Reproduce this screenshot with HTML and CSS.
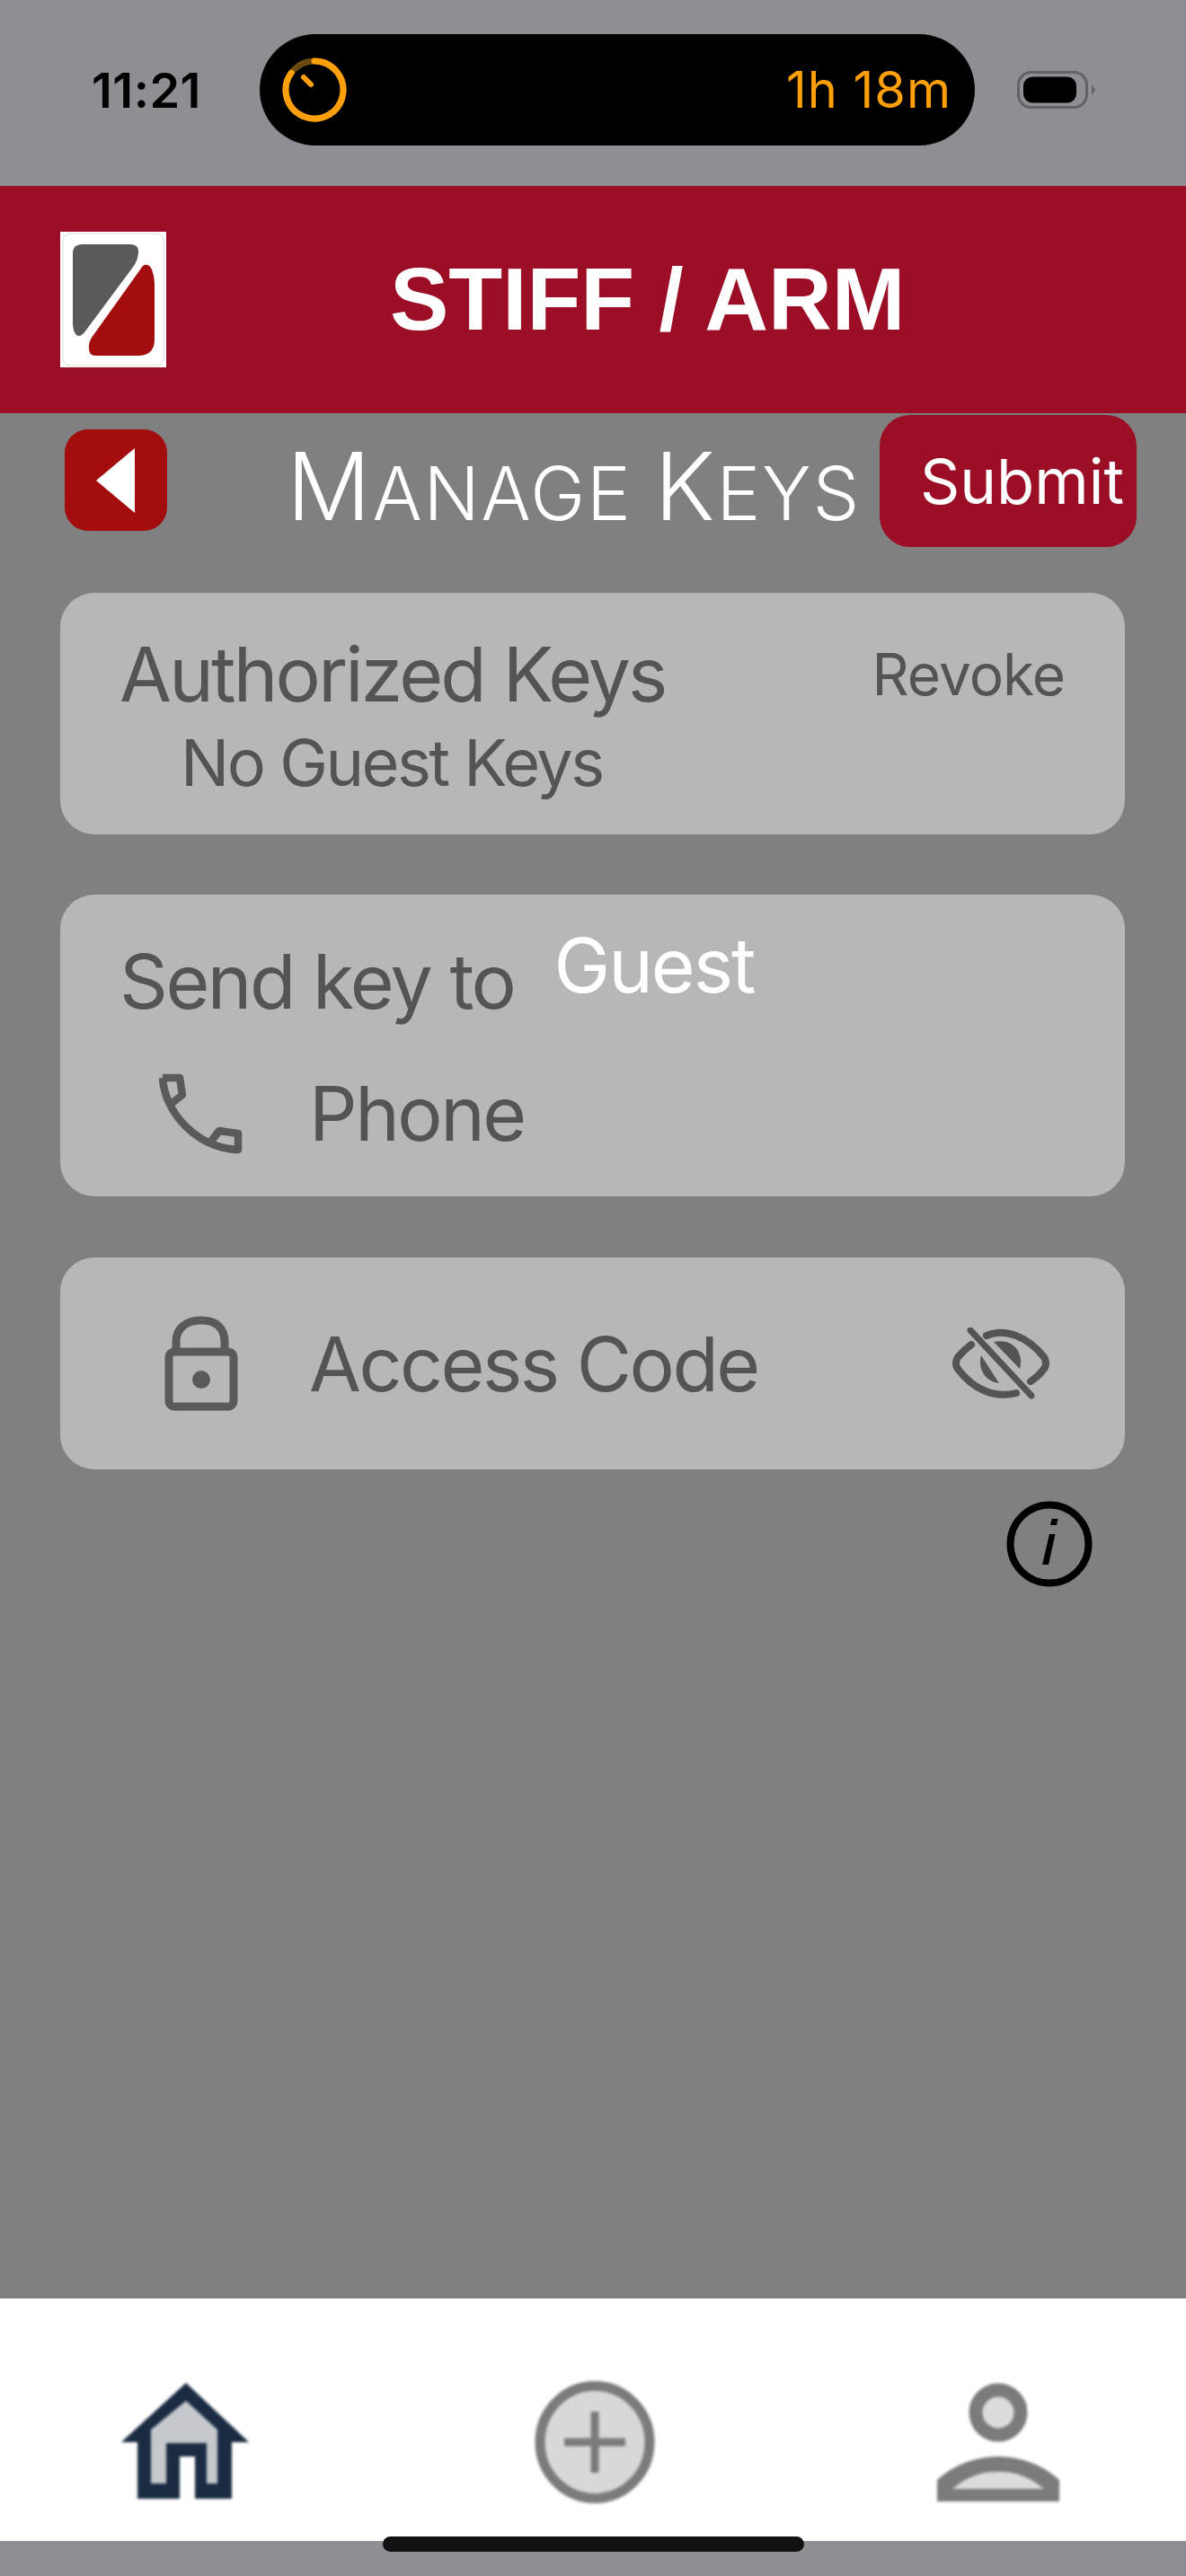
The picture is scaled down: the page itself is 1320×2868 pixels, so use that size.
FILE: index.html
```html
<!DOCTYPE html>
<html lang="en">
<head>
    <meta charset="UTF-8">
    <title>Stiff / Arm - Manage Keys</title>
    <link rel="stylesheet" href="styles.css">
</head>
<body>
    <div class="phone">
        <!-- Status bar -->
        <div class="status-bar">
            <span class="time">11:21</span>
            <div class="island">
                <svg class="timer" width="72" height="72" viewBox="0 0 72 72" fill="none">
                    <circle cx="36" cy="36" r="32" stroke="#6b4a10" stroke-width="7"/>
                    <path d="M36 4A32 32 0 1 1 10.100 17.200" stroke="#ff9f0a" stroke-width="7" stroke-linecap="round"/>
                    <path d="M24 22L32 30" stroke="#ff9f0a" stroke-width="6" stroke-linecap="round"/>
                </svg>
                <span class="timer-text">1h 18m</span>
            </div>
            <svg class="battery" width="88" height="42" viewBox="0 0 88 42">
                <rect x="1.500" y="1.500" width="76" height="39" rx="14" fill="none" stroke="#636366" stroke-width="3"/>
                <rect x="7" y="6.500" width="59" height="29" rx="10" fill="#000"/>
                <path d="M83 15L87 21L83 27Z" fill="#636366"/>
            </svg>
        </div>

        <!-- Header -->
        <header class="app-header">
            <svg class="logo" width="118" height="151" viewBox="0 0 118 151">
                <rect width="118" height="151" fill="#fff"/>
                <rect x="3" y="2" width="112" height="147" rx="8" fill="none" stroke="#dcdce0" stroke-width="1"/>
                <path d="M14 24Q14 14 25 14H78Q88 14 87 24Q86 32 82 38L27 112Q20 120 16 112Q14 108 14 102Z" fill="#5a5a5a"/>
                <path d="M92 38Q98 34 102 42Q105 50 105 58V120Q105 137 88 138H40Q31 138 32 128Q32 121 37 115Z" fill="#a30d0d"/>
            </svg>
            <h1 class="app-title">STIFF / ARM</h1>
        </header>

        <!-- Main content -->
        <main class="content">
            <div class="title-row">
                <button class="back-button">
                    <svg width="44" height="72" viewBox="0 0 44 72"><path d="M43 0V72L0 36Z" fill="#fff"/></svg>
                </button>
                <h2 class="page-title"><span class="cap">M</span>anage <span class="cap">K</span>eys</h2>
                <button class="submit-button">Submit</button>
            </div>

            <section class="card keys-card">
                <div class="keys-top">
                    <span class="card-label">Authorized Keys</span>
                    <span class="revoke">Revoke</span>
                </div>
                <div class="no-keys">No Guest Keys</div>
            </section>

            <section class="card send-card">
                <div class="send-top">
                    <span class="card-label">Send key to</span>
                    <span class="guest">Guest</span>
                </div>
                <div class="field-row">
                    <svg class="field-icon" width="96" height="92" viewBox="0 0 96 92" fill="none" stroke="#5a5a5a" stroke-width="8.500" stroke-linejoin="round">
                        <path d="M5 6H24L27 25L13 36"/>
                        <path d="M5 6C7 44 42 84 89 86V68L68 65L57 79"/>
                    </svg>
                    <span class="card-label">Phone</span>
                </div>
            </section>

            <section class="card code-card">
                <svg class="field-icon" width="96" height="106" viewBox="0 0 96 106" fill="none" stroke="#5a5a5a" stroke-width="9">
                    <path d="M20 42V29C20 13 32 5 48 5S74 13 74 29V42"/>
                    <rect x="12" y="40" width="72" height="61" rx="6"/>
                    <circle cx="48" cy="71" r="10" fill="#5a5a5a" stroke="none"/>
                </svg>
                <span class="card-label">Access Code</span>
                <svg class="eye" width="108" height="80" viewBox="0 0 108 80" fill="none" stroke="#545450" stroke-width="8" stroke-linecap="round">
                    <path d="M38 9C58 0 84 10 102 33Q106 40 102 46Q96 54 87 60"/>
                    <path d="M21 19Q13 25 6 33Q2 40 6 46C24 70 48 79 71 73"/>
                    <path d="M20 3L88 76" stroke-width="7"/>
                    <path d="M32 31C28 46 36 60 52 62Z" fill="#545450" stroke="none"/>
                    <path d="M46 16C66 12 80 26 75 46Z" fill="#545450" stroke="none"/>
                </svg>
            </section>

            <div class="info-row">
                <svg width="96" height="96" viewBox="0 0 96 96" fill="none">
                    <circle cx="48" cy="48" r="43.500" stroke="#000" stroke-width="8"/>
                    <path d="M48 37H54.500L47 71H40Z" fill="#000"/>
                    <path d="M50.500 20H57.500L56 27H49Z" fill="#000"/>
                </svg>
            </div>
        </main>

        <!-- Bottom tabs -->
        <nav class="tab-bar">
            <svg class="tab-icon" width="148" height="134" viewBox="0 -2 148 134">
                <path d="M72 0L142 66H123V129H82V82H65V129H18V66H0Z" fill="#1a2b42"/>
                <path d="M72 20L33 52V112H50V67H95V112H107V52Z" fill="#c5c8cc"/>
            </svg>
            <svg class="tab-icon" width="136" height="138" viewBox="0 0 136 138" fill="#d8d8d8" stroke="#7b7b7b">
                <ellipse cx="67" cy="68" rx="61" ry="62.500" stroke-width="11"/>
                <path d="M67 34V102M33 68H101" stroke-width="9" fill="none"/>
            </svg>
            <svg class="tab-icon" width="136" height="136" viewBox="0 -2 136 136">
                <circle cx="68" cy="33" r="25" fill="#dcdcdc" stroke="#7b7b7b" stroke-width="15"/>
                <path d="M0 132V108C20 90 45 82 68 82S116 90 136 108V132Z" fill="#7b7b7b"/>
                <path d="M17 118C35 103 50 99 68 99S101 103 119 118Z" fill="#dcdcdc"/>
            </svg>
            <div class="home-indicator"></div>
        </nav>
        <div class="bottom-strip"></div>
    </div>
</body>
</html>
```

FILE: styles.css
```css
/* Page */
body {
    margin: 0;
    font-family: Inter, "Liberation Sans", sans-serif;
    background-color: #808080;
}

.phone {
    display: flex;
    flex-direction: column;
    height: 2868px;
    overflow: hidden;
}

h1, h2 {
    margin: 0;
    font-weight: normal;
}

button {
    border: none;
    padding: 0;
    font-family: inherit;
}

/* Status bar */
.status-bar {
    display: flex;
    align-items: center;
    height: 207px;
    flex-shrink: 0;
    padding: 0 0 7px 102px;
    box-sizing: border-box;
    background-color: #8e8e93;
}

.time {
    width: 187px;
    font-size: 54px;
    font-weight: 600;
    letter-spacing: 0.500px;
    color: #000;
}

.island {
    display: flex;
    align-items: center;
    justify-content: space-between;
    width: 796px;
    height: 124px;
    padding: 0 26px 0 25px;
    box-sizing: border-box;
    border-radius: 62px;
    background-color: #000;
}

.timer-text {
    font-size: 56px;
    letter-spacing: 1px;
    color: #ff9f0a;
}

.battery {
    margin-left: 47px;
}

/* Header */
.app-header {
    display: flex;
    align-items: center;
    height: 253px;
    flex-shrink: 0;
    padding-left: 67px;
    box-sizing: border-box;
    background-color: #9b0e25;
}

.app-title {
    margin-left: 249px;
    font-family: "Liberation Sans", Arial, sans-serif;
    font-size: 98px;
    font-weight: bold;
    color: #fff;
}

/* Main content */
.content {
    display: flex;
    flex-direction: column;
    flex: 1;
    padding: 2px 68px 0 67px;
    background-color: #808080;
}

.title-row {
    display: flex;
    align-items: flex-start;
    height: 198px;
    margin-right: -13px;
}

.back-button {
    display: flex;
    align-items: center;
    justify-content: center;
    width: 114px;
    height: 113px;
    margin: 16px 0 0 5px;
    border-radius: 26px;
    background-color: #a30d0d;
}

.page-title {
    margin: 16px 0 0 133px;
    width: 660px;
    font-size: 82px;
    font-weight: 300;
    letter-spacing: 1.800px;
    text-transform: uppercase;
    color: #fff;
    white-space: nowrap;
}

.cap {
    font-size: 104px;
}

.submit-button {
    width: 286px;
    height: 147px;
    padding-left: 45px;
    border-radius: 34px;
    background-color: #9b0e25;
    font-size: 69px;
    text-align: left;
    color: #fff;
}

.card {
    box-sizing: border-box;
    border-radius: 38px;
    background-color: #b7b7b5;
    color: #545450;
}

.card-label {
    font-size: 84px;
    letter-spacing: -2.500px;
}

.keys-card {
    height: 269px;
    padding: 40px 67px 0 66px;
}

.keys-top {
    display: flex;
    justify-content: space-between;
    align-items: center;
}

.keys-top .card-label {
    letter-spacing: -2.800px;
}

.revoke {
    font-size: 64px;
    letter-spacing: -1px;
}

.no-keys {
    margin: 4px 0 0 68px;
    font-size: 72px;
    letter-spacing: -2.500px;
}

.send-card {
    height: 336px;
    margin-top: 67px;
    padding: 46px 69px 0 66px;
}

.send-top {
    display: flex;
    align-items: flex-start;
}

.guest {
    margin: -18px 0 0 44px;
    font-size: 84px;
    letter-spacing: -2px;
    color: #fff;
}

.field-row {
    display: flex;
    align-items: center;
    margin-top: 46px;
}

.field-icon {
    flex-shrink: 0;
    margin: 0 72px 0 43px;
}

.code-card {
    display: flex;
    align-items: center;
    height: 236px;
    margin-top: 68px;
    padding: 0 84px 0 66px;
}

.eye {
    margin-left: auto;
}

.info-row {
    display: flex;
    justify-content: flex-end;
    margin-top: 35px;
    padding-right: 36px;
}

/* Bottom tabs */
.tab-bar {
    position: relative;
    display: flex;
    align-items: flex-start;
    justify-content: space-between;
    height: 270px;
    flex-shrink: 0;
    padding: 92px 141px 0 135px;
    box-sizing: border-box;
    background-color: #fff;
}

.tab-icon {
    filter: blur(1.500px);
}

.home-indicator {
    position: absolute;
    left: 426px;
    top: 265px;
    width: 469px;
    height: 17px;
    border-radius: 9px;
    background-color: #111;
}

.bottom-strip {
    height: 39px;
    flex-shrink: 0;
    background-color: #8e8e93;
}
```
